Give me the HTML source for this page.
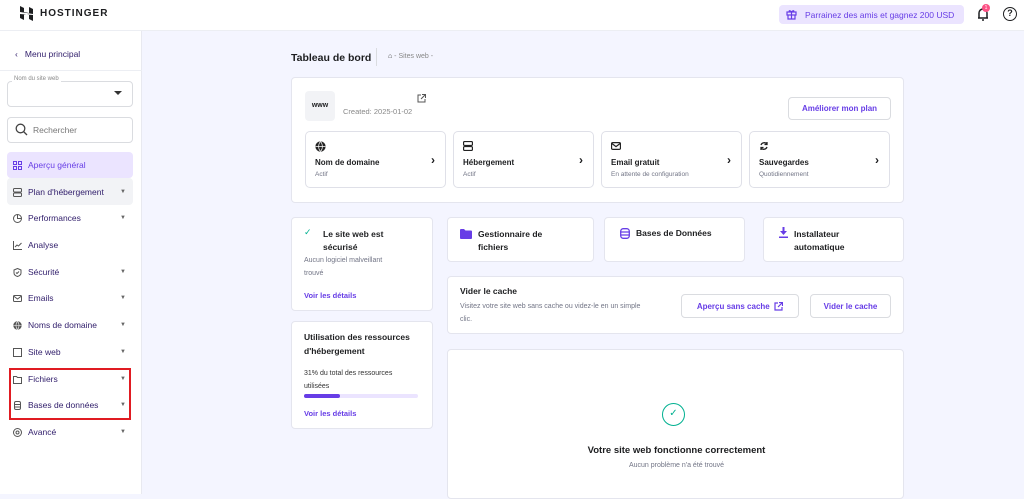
<!DOCTYPE html>
<html><head><meta charset="utf-8"><style>
*{box-sizing:border-box;margin:0;padding:0}
body{width:1024px;height:494px;overflow:hidden;font-family:"Liberation Sans",sans-serif;background:#f4f5ff;position:relative;color:#1d1e20}
.a{position:absolute}
.hdr{left:0;top:0;width:1024px;height:31px;background:#fff;border-bottom:1px solid #eceef3}
.side{left:0;top:31px;width:142px;height:463px;background:#fff;border-right:1px solid #e8e9f0}
.it{position:absolute;left:13px;font-size:8.5px;color:#2f1c6a;display:flex;align-items:center;width:113px}
.it svg{margin-right:6px;flex:none}
.it b{position:absolute;right:0;font-weight:normal;font-size:6px;color:#666}
.card{position:absolute;background:#fff;border:1px solid #e4e5ee;border-radius:4px}
.sc{position:absolute;top:131px;width:141px;height:57px;border:1px solid #dfe0e8;border-radius:5px;background:#fff}
.sc .t{position:absolute;left:9px;top:26px;font-size:8px;font-weight:bold}
.sc .s{position:absolute;left:9px;top:39px;font-size:6.5px;color:#727586}
.sc .ar{position:absolute;right:10px;top:21px;font-size:12px;font-weight:bold}
.sc svg{position:absolute;left:9px;top:9px}
.pur{color:#673de6}
.btn{position:absolute;border:1px solid #dadce0;border-radius:4px;background:#fff;color:#673de6;font-weight:bold;font-size:8px;display:flex;align-items:center;justify-content:center}
</style></head><body>
<div class="a hdr">
 <svg class="a" style="left:20px;top:6px" width="13" height="15" viewBox="0 0 13 15"><path d="M0 0l4 2v4l5 1V1l4 2v5L0 6z M0 8l13 1v6l-4-2V9L4 8v6L0 12z" fill="#1d1e20"/></svg>
 <div class="a" style="left:40px;top:8px;font-size:10px;font-weight:bold;letter-spacing:1px">HOSTINGER</div>
 <div class="a" style="left:779px;top:5px;width:185px;height:19px;background:#ebe4ff;border-radius:4px;font-size:8.5px;color:#673de6;padding:5px 0 0 26px">Parrainez des amis et gagnez 200 USD</div>
 <svg class="a" style="left:786px;top:9px" width="11" height="11" viewBox="0 0 11 11" fill="none" stroke="#673de6" stroke-width="1.2"><rect x="1" y="3" width="9" height="3"/><path d="M2 6v4h7V6M5.5 3v7M5.5 3C4 1 2.5 1.5 3.5 3M5.5 3C7 1 8.5 1.5 7.5 3"/></svg>
 <svg class="a" style="left:976px;top:6px" width="14" height="16" viewBox="0 0 14 16" fill="none" stroke="#1d1e20" stroke-width="1.5"><path d="M3 12V7a4 4 0 018 0v5H2h10M6 14h2"/></svg>
 <div class="a" style="left:982px;top:4px;width:8px;height:8px;background:#fc5185;border-radius:50%;color:#fff;font-size:5px;text-align:center;line-height:8px">1</div>
 <div class="a" style="left:1003px;top:7px;width:14px;height:14px;border:1.5px solid #1d1e20;border-radius:50%;font-size:9px;font-weight:bold;text-align:center;line-height:11px">?</div>
</div>
<div class="a side">
 <div class="a" style="left:15px;top:18px;font-size:8.5px;color:#2f1c6a">‹&nbsp;&nbsp; Menu principal</div>
 <div class="a" style="left:0;top:39px;width:142px;height:1px;background:#eceef3"></div>
 <div class="a" style="left:7px;top:50px;width:126px;height:26px;border:1px solid #dadce0;border-radius:4px"></div>
 <div class="a" style="left:12px;top:45px;font-size:6px;color:#888;background:#fff;padding:0 2px">Nom du site web</div>
 <div class="a" style="left:114px;top:60px;border:4px solid transparent;border-top:4px solid #333"></div>
 <div class="a" style="left:7px;top:86px;width:126px;height:26px;border:1px solid #dadce0;border-radius:4px"></div>
 <svg class="a" style="left:15px;top:92px" width="13" height="13" viewBox="0 0 13 13" fill="none" stroke="#444" stroke-width="1.3"><circle cx="5.5" cy="5.5" r="4.3"/><path d="M8.5 8.5l3.5 3.5"/></svg>
 <div class="a" style="left:33px;top:94px;font-size:8.5px;color:#777">Rechercher</div>
 <div class="a" style="left:7px;top:121px;width:126px;height:26px;background:#ebe4ff;border-radius:4px"></div>
 <div class="a" style="left:7px;top:147px;width:126px;height:27px;background:#f2f3f6;border-radius:4px"></div>
</div>
<div class="it" style="top:160px"><svg width="9" height="9" viewBox="0 0 9 9" fill="none" stroke="#673de6" stroke-width="1"><rect x=".5" y=".5" width="3" height="3"/><rect x="5.5" y=".5" width="3" height="3"/><rect x=".5" y="5.5" width="3" height="3"/><rect x="5.5" y="5.5" width="3" height="3"/></svg><span class="pur">Aperçu général</span></div>
<div class="it" style="top:187px"><svg width="9" height="9" viewBox="0 0 9 9" fill="none" stroke="#555"><rect x=".5" y=".5" width="8" height="3.5" rx="1"/><rect x=".5" y="5" width="8" height="3.5" rx="1"/></svg>Plan d'hébergement<b>▼</b></div>
<div class="it" style="top:213px"><svg width="9" height="9" viewBox="0 0 9 9" fill="none" stroke="#555"><circle cx="4.5" cy="4.5" r="4"/><path d="M4.5 .5v4h4"/></svg>Performances<b>▼</b></div>
<div class="it" style="top:240px"><svg width="9" height="9" viewBox="0 0 9 9" fill="none" stroke="#555"><path d="M.5 0v8.5H9M2 6l2-2 1.5 1L8.5 2"/></svg>Analyse</div>
<div class="it" style="top:267px"><svg width="9" height="9" viewBox="0 0 9 9" fill="none" stroke="#555"><path d="M4.5.5L8 2v3c0 2-2 3-3.5 3.5C3 8 1 7 1 5V2z"/><path d="M3 4.5l1 1 2-2"/></svg>Sécurité<b>▼</b></div>
<div class="it" style="top:293px"><svg width="9" height="9" viewBox="0 0 9 9" fill="none" stroke="#555"><rect x=".5" y="1.5" width="8" height="6" rx="1"/><path d="M.5 2l4 3 4-3"/></svg>Emails<b>▼</b></div>
<div class="it" style="top:320px"><svg width="9" height="9" viewBox="0 0 9 9"><circle cx="4.5" cy="4.5" r="4.2" fill="#555"/><path d="M.5 4.5h8M4.5.5c-2 2-2 6 0 8M4.5.5c2 2 2 6 0 8" stroke="#fff" stroke-width=".6" fill="none"/></svg>Noms de domaine<b>▼</b></div>
<div class="it" style="top:347px"><svg width="9" height="9" viewBox="0 0 9 9" fill="none" stroke="#555"><rect x=".5" y=".5" width="8" height="8"/></svg>Site web<b>▼</b></div>
<div class="it" style="top:374px"><svg width="9" height="9" viewBox="0 0 9 9" fill="none" stroke="#555"><path d="M.5 1.5h3l1 1h4v6h-8z"/></svg>Fichiers<b>▼</b></div>
<div class="it" style="top:400px"><svg width="9" height="9" viewBox="0 0 9 9" fill="none" stroke="#555"><rect x="1.5" y=".5" width="6" height="8" rx="1.5"/><path d="M1.5 3.5h6M1.5 6h6"/></svg>Bases de données<b>▼</b></div>
<div class="it" style="top:427px"><svg width="9" height="9" viewBox="0 0 9 9" fill="none" stroke="#555"><circle cx="4.5" cy="4.5" r="4"/><circle cx="4.5" cy="4.5" r="1.5"/></svg>Avancé<b>▼</b></div>
<div class="a" style="left:9px;top:368px;width:122px;height:52px;border:2px solid #e01b22"></div>

<div class="a" style="left:291px;top:52px;font-size:10.5px;font-weight:bold">Tableau de bord</div>
<div class="a" style="left:376px;top:48px;width:1px;height:18px;background:#dadce0"></div>
<div class="a" style="left:388px;top:53px;font-size:7px;color:#888"><span style="color:#333">⌂</span> - Sites web -</div>

<div class="card" style="left:291px;top:77px;width:613px;height:126px">
 <div class="a" style="left:13px;top:13px;width:30px;height:30px;background:#f2f3f6;border-radius:4px;font-size:7px;font-weight:bold;text-align:center;line-height:30px">www</div>
 <div class="a" style="left:51px;top:29px;font-size:7.5px;color:#888">Created: 2025-01-02</div>
 <svg class="a" style="left:125px;top:16px" width="9" height="9" viewBox="0 0 9 9" fill="none" stroke="#555"><path d="M4 1H1v7h7V5M5 .5h3.5V4M8.5.5L4 5"/></svg>
 <div class="btn" style="left:496px;top:19px;width:103px;height:23px">Améliorer mon plan</div>
</div>
<div class="sc" style="left:305px"><svg width="11" height="11" viewBox="0 0 9 9"><circle cx="4.5" cy="4.5" r="4.2" fill="#222"/><path d="M.5 4.5h8M4.5.5c-2 2-2 6 0 8M4.5.5c2 2 2 6 0 8" stroke="#fff" stroke-width=".6" fill="none"/></svg><div class="t">Nom de domaine</div><div class="s">Actif</div><div class="ar">›</div></div>
<div class="sc" style="left:453px"><svg width="10" height="10" viewBox="0 0 9 9" fill="none" stroke="#222" stroke-width="1.1"><rect x=".5" y=".5" width="8" height="3.5" rx="1"/><rect x=".5" y="5" width="8" height="3.5" rx="1"/></svg><div class="t">Hébergement</div><div class="s">Actif</div><div class="ar">›</div></div>
<div class="sc" style="left:601px"><svg width="10" height="10" viewBox="0 0 9 9" fill="none" stroke="#222" stroke-width="1.1"><rect x=".5" y="1.5" width="8" height="6" rx="1"/><path d="M.5 2l4 3 4-3"/></svg><div class="t">Email gratuit</div><div class="s">En attente de configuration</div><div class="ar">›</div></div>
<div class="sc" style="left:749px"><svg width="10" height="10" viewBox="0 0 10 10" fill="none" stroke="#222" stroke-width="1.3"><path d="M8 3a3.5 3.5 0 00-6 1M2 7a3.5 3.5 0 006-1M8 1v2.5H5.5M2 9V6.5h2.5"/></svg><div class="t">Sauvegardes</div><div class="s">Quotidiennement</div><div class="ar">›</div></div>

<div class="card" style="left:291px;top:217px;width:142px;height:94px">
 <div class="a" style="left:12px;top:9px;font-size:9px;color:#00b090">✓</div>
 <div class="a" style="left:31px;top:10px;font-size:8.5px;font-weight:bold;line-height:13px">Le site web est<br>sécurisé</div>
 <div class="a" style="left:12px;top:36px;font-size:7px;color:#727586;line-height:13px">Aucun logiciel malveillant<br>trouvé</div>
 <div class="a pur" style="left:12px;top:73px;font-size:7.5px;font-weight:bold">Voir les détails</div>
</div>
<div class="card" style="left:291px;top:321px;width:142px;height:108px">
 <div class="a" style="left:12px;top:8px;font-size:8.5px;font-weight:bold;line-height:14px">Utilisation des ressources<br>d'hébergement</div>
 <div class="a" style="left:12px;top:45px;font-size:7px;color:#333;line-height:13px">31% du total des ressources<br>utilisées</div>
 <div class="a" style="left:12px;top:72px;width:114px;height:4px;background:#ebe4ff;border-radius:2px"><div style="width:36px;height:4px;background:#673de6;border-radius:2px"></div></div>
 <div class="a pur" style="left:12px;top:87px;font-size:7.5px;font-weight:bold">Voir les détails</div>
</div>

<div class="card" style="left:447px;top:217px;width:147px;height:45px">
 <svg class="a" style="left:12px;top:11px" width="12" height="10" viewBox="0 0 12 10"><path d="M0 1a1 1 0 011-1h3l1.5 1.5H11a1 1 0 011 1V9a1 1 0 01-1 1H1a1 1 0 01-1-1z" fill="#673de6"/></svg>
 <div class="a" style="left:30px;top:10px;font-size:8.5px;font-weight:bold;line-height:13px">Gestionnaire de<br>fichiers</div>
</div>
<div class="card" style="left:604px;top:217px;width:141px;height:45px">
 <svg class="a" style="left:15px;top:10px" width="10" height="11" viewBox="0 0 10 11" fill="none" stroke="#673de6" stroke-width="1.3"><rect x=".7" y=".7" width="8.6" height="9.6" rx="2.5"/><path d="M.7 4h8.6M.7 7h8.6"/></svg>
 <div class="a" style="left:31px;top:10px;font-size:8.5px;font-weight:bold">Bases de Données</div>
</div>
<div class="card" style="left:763px;top:217px;width:141px;height:45px">
 <svg class="a" style="left:15px;top:9px" width="9" height="11" viewBox="0 0 9 11" fill="#673de6"><path d="M3.5 0h2v4h2.5L4.5 8 1 4h2.5z"/><rect x="0" y="9.5" width="9" height="1.5"/></svg>
 <div class="a" style="left:30px;top:10px;font-size:8.5px;font-weight:bold;line-height:13px">Installateur<br>automatique</div>
</div>
<div class="card" style="left:447px;top:276px;width:457px;height:58px">
 <div class="a" style="left:12px;top:9px;font-size:8.5px;font-weight:bold">Vider le cache</div>
 <div class="a" style="left:12px;top:23px;font-size:7px;color:#727586;line-height:13px">Visitez votre site web sans cache ou videz-le en un simple<br>clic.</div>
 <div class="btn" style="left:233px;top:17px;width:118px;height:24px">Aperçu sans cache&nbsp;&nbsp;<svg width="9" height="9" viewBox="0 0 9 9" fill="none" stroke="#673de6" stroke-width="1.2"><path d="M4 1H1v7h7V5M5 .5h3.5V4M8.5.5L4 5"/></svg></div>
 <div class="btn" style="left:362px;top:17px;width:81px;height:24px">Vider le cache</div>
</div>
<div class="card" style="left:447px;top:349px;width:457px;height:150px">
 <div class="a" style="left:214px;top:53px;width:23px;height:23px;border:1.5px solid #00b090;border-radius:50%;color:#00b090;font-size:10px;text-align:center;line-height:20px">✓</div>
 <div class="a" style="left:0;top:95px;width:457px;text-align:center;font-size:9.5px;font-weight:bold">Votre site web fonctionne correctement</div>
 <div class="a" style="left:0;top:112px;width:457px;text-align:center;font-size:7px;color:#727586">Aucun problème n'a été trouvé</div>
</div>
</body></html>
